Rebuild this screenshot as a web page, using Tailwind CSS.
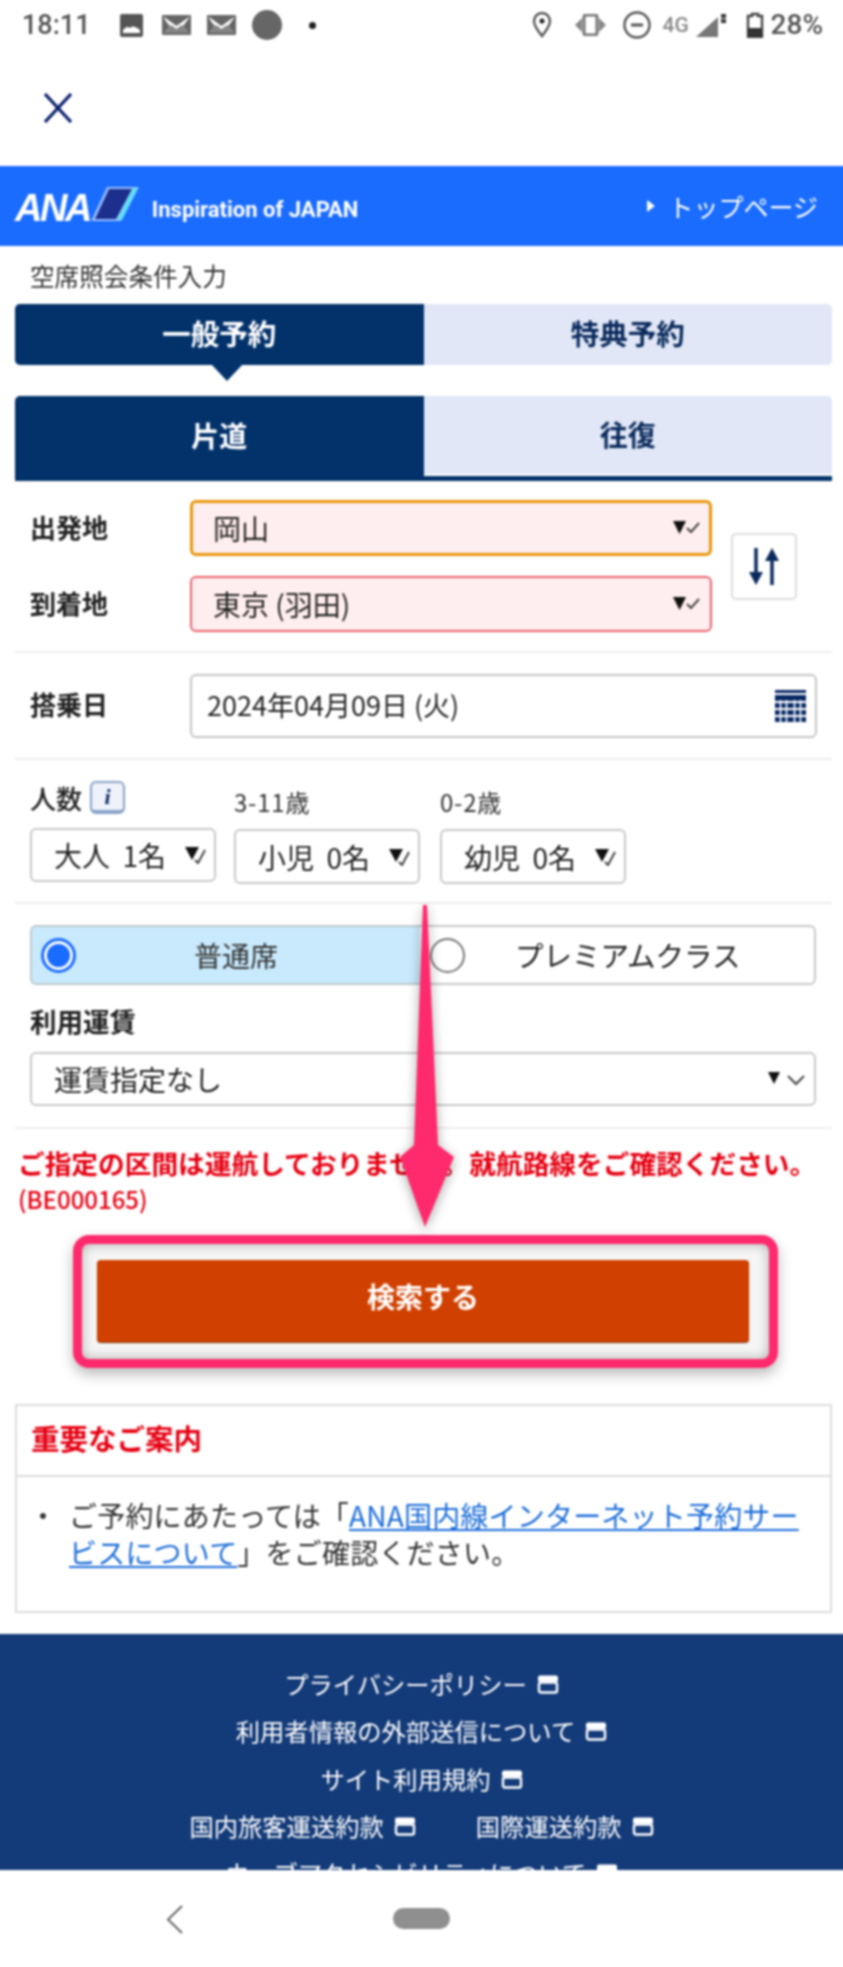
<!DOCTYPE html>
<html lang="ja">
<head>
<meta charset="utf-8">
<title>ANA</title>
<script src="https://cdn.jsdelivr.net/npm/@tailwindcss/browser@4"></script>
</head>
<body>
<div class="w-[843px] h-[1967px] overflow-hidden">
<div class="relative -ml-[4px] w-[851px] px-[4px] h-[1967px] overflow-hidden flex flex-col bg-white text-[#222] blur-[0.8px] font-['Noto_Sans_CJK_JP','Noto_Sans',sans-serif]">

  <!-- status bar -->
  <div class="h-[50px] shrink-0 flex items-center pl-[22px] pr-[20px] text-[#555]">
    <span class="text-[27px] leading-none font-['Roboto',sans-serif] font-medium w-[98px]">18:11</span>
    <svg class="w-[23px] h-[23px]" viewBox="0 0 23 23"><rect width="23" height="23" rx="2" fill="#555"/><path d="M3 19 L3 16 Q7 11 10 14 Q13 10 20 16 L20 19Z" fill="#fff"/></svg>
    <svg class="w-[29px] h-[20px] ml-[19px]" viewBox="0 0 29 20"><rect width="29" height="20" rx="1" fill="#666"/><path d="M2 2 L14.5 11 L27 2 L27 3 Q22 10 21 11 L27 18 L2 18 L8 11 Q4 7 2 3Z" fill="#fff"/><path d="M2 18 L9 10 L14.5 14 L20 10 L27 18Z" fill="#666" opacity=".8"/></svg>
    <svg class="w-[29px] h-[20px] ml-[16px]" viewBox="0 0 29 20"><rect width="29" height="20" rx="1" fill="#666"/><path d="M2 2 L14.5 11 L27 2 L27 3 Q22 10 21 11 L27 18 L2 18 L8 11 Q4 7 2 3Z" fill="#fff"/><path d="M2 18 L9 10 L14.5 14 L20 10 L27 18Z" fill="#666" opacity=".8"/></svg>
    <div class="w-[30px] h-[30px] ml-[16px] rounded-full bg-[#666]"></div>
    <div class="w-[7px] h-[7px] ml-[27px] rounded-full bg-[#222]"></div>
    <div class="flex-1"></div>
    <svg class="w-[20px] h-[26px]" viewBox="0 0 20 26"><path d="M10 24 Q2 14 2 9 A8 8 0 0 1 18 9 Q18 14 10 24Z" fill="none" stroke="#555" stroke-width="2.4"/><circle cx="10" cy="9" r="2.5" fill="#222"/></svg>
    <svg class="w-[31px] h-[22px] ml-[23px]" viewBox="0 0 31 22"><rect x="9" y="1" width="13" height="20" rx="2" fill="none" stroke="#777" stroke-width="3"/><path d="M0 11 L7 4 L7 18Z M31 11 L24 4 L24 18Z" fill="#888"/></svg>
    <svg class="w-[28px] h-[28px] ml-[17px]" viewBox="0 0 28 28"><circle cx="14" cy="14" r="12.5" fill="none" stroke="#555" stroke-width="2.4"/><rect x="8" y="12.5" width="12" height="3" fill="#555"/></svg>
    <span class="ml-[12px] text-[21px] leading-none font-['Roboto',sans-serif] font-medium text-[#888] w-[30px]">4G</span>
    <svg class="w-[32px] h-[26px] ml-[3px]" viewBox="0 0 32 26"><path d="M0 25 L22 5 L22 25Z" fill="#777"/><rect x="25" y="2" width="5" height="8" fill="#444" opacity=".7"/><rect x="25" y="2" width="5" height="3" fill="#333"/><rect x="25" y="8" width="5" height="3" fill="#333"/></svg>
    <svg class="w-[18px] h-[26px] ml-[18px]" viewBox="0 0 18 26"><path d="M6 2 L12 2 L12 4 L16 4 L16 25 L2 25 L2 4 L6 4Z" fill="none" stroke="#444" stroke-width="2.4"/><rect x="2" y="16" width="14" height="9" fill="#333"/></svg>
    <span class="ml-[7px] text-[28px] leading-none font-['Roboto',sans-serif] font-medium">28%</span>
  </div>

  <!-- close bar -->
  <div class="h-[116px] shrink-0 flex items-center pl-[43px]">
    <svg class="w-[30px] h-[30px]" viewBox="0 0 30 30"><path d="M2 1 L28 29 M28 1 L2 29" stroke="#0a1f6b" stroke-width="3.2" fill="none"/></svg>
  </div>

  <!-- header -->
  <div class="-mx-[4px] h-[80px] shrink-0 bg-[#1a6cff] flex items-center pl-[19px] pr-[29px] text-white">
    <span class="text-[38px] leading-none font-bold italic tracking-[-2.5px] font-['Liberation_Sans',sans-serif] mt-[4px]">ANA</span>
    <svg class="w-[50px] h-[36px] ml-[1px] -mt-[4px]" viewBox="0 0 50 36"><path d="M16 1 L48 1 L30 35 L0 35Z" fill="#fff" opacity=".55"/><path d="M18 3 L41 3 L25 33 L4 33Z" fill="#1c2f8c"/><path d="M42 2 L47 2 L31 34 L26 34Z" fill="#5fe0f5"/></svg>
    <span class="ml-[11px] mt-[7px] text-[22px] leading-none font-bold font-['Roboto',sans-serif]">Inspiration of JAPAN</span>
    <div class="flex-1"></div>
    <svg class="w-[8px] h-[12px] mr-[13px]" viewBox="0 0 9 14"><path d="M0 0 L9 7 L0 14Z" fill="#fff"/></svg>
    <span class="text-[25px] leading-none">トップページ</span>
  </div>

  <!-- page label -->
  <div class="h-[58px] shrink-0 flex items-center pl-[30px] text-[24.6px] leading-none text-[#333]">空席照会条件入力</div>

  <!-- form -->
  <div class="shrink-0 pl-[15px] pr-[11px]">
    <div class="grid grid-cols-2 h-[61px] text-[28.5px] font-bold">
      <div class="relative flex items-center justify-center pb-[2px] rounded-l-[5px] bg-[#03326b] text-white">一般予約
        <div class="absolute left-[196px] top-[60px] w-0 h-0 border-x-[16px] border-x-transparent border-t-[17px] border-t-[#03326b]"></div>
      </div>
      <div class="flex items-center justify-center pb-[2px] rounded-r-[5px] bg-[#e1e7f6] text-[#0a2a5c]">特典予約</div>
    </div>

    <div class="mt-[31px] grid grid-cols-2 h-[85px] text-[28px] font-bold border-b-[5px] border-[#03326b]">
      <div class="flex items-center justify-center pb-[2px] rounded-tl-[5px] bg-[#03326b] text-white">片道</div>
      <div class="flex items-center justify-center pb-[2px] rounded-tr-[5px] bg-[#e1e7f6] text-[#0a2a5c] border-b-[2px] border-white">往復</div>
    </div>

    <!-- route -->
    <div class="h-[172px] border-b-2 border-[#eeeeee] pt-[20px] flex items-center box-border">
      <div class="flex flex-col gap-[20px] -mt-[20px]">
        <div class="flex items-center">
          <span class="w-[175px] pl-[15px] pb-[4px] text-[26px] font-bold">出発地</span>
          <div class="w-[522px] h-[56px] rounded-[6px] border-[3px] border-[#e8960c] bg-[#ffeeef] flex items-center justify-between pl-[20px] pr-[8px] text-[28px]">
            <span>岡山</span>
            <svg class="w-[28px] h-[16px]" viewBox="0 0 28 16"><path d="M0 1 L13 1 L6.5 14Z" fill="#111"/><path d="M14 8 L18 12 L26 3" fill="none" stroke="#444" stroke-width="2"/></svg>
          </div>
        </div>
        <div class="flex items-center">
          <span class="w-[175px] pl-[15px] pb-[4px] text-[26px] font-bold">到着地</span>
          <div class="w-[522px] h-[56px] rounded-[6px] border-[2px] border-[#e8606a] bg-[#ffeeef] flex items-center justify-between pl-[21px] pr-[9px] text-[28px]">
            <span>東京 (羽田)</span>
            <svg class="w-[28px] h-[16px]" viewBox="0 0 28 16"><path d="M0 1 L13 1 L6.5 14Z" fill="#111"/><path d="M14 8 L18 12 L26 3" fill="none" stroke="#444" stroke-width="2"/></svg>
          </div>
        </div>
      </div>
      <button class="w-[66px] h-[67px] ml-[19px] -mt-[19px] rounded-[5px] border-2 border-[#dddddd] bg-white flex items-center justify-center">
        <svg class="w-[30px] h-[37px]" viewBox="0 0 30 37"><path d="M7 0 L7 28" stroke="#0a2a5c" stroke-width="3.5"/><path d="M0 24 L14 24 L7 37Z" fill="#0a2a5c"/><path d="M23 37 L23 9" stroke="#0a2a5c" stroke-width="3.5"/><path d="M16 13 L30 13 L23 0Z" fill="#0a2a5c"/></svg>
      </button>
    </div>

    <!-- date -->
    <div class="h-[107px] border-b-2 border-[#eeeeee] flex items-center box-border">
      <span class="w-[175px] pl-[15px] pb-[4px] text-[26px] font-bold">搭乗日</span>
      <div class="w-[627px] h-[64px] rounded-[6px] border-[2px] border-[#c4c4c4] bg-white flex items-center justify-between pl-[15px] pr-[9px] text-[27px]">
        <span>2024年04月09日 (火)</span>
        <svg class="w-[31px] h-[32px]" viewBox="0 0 31 32" fill="#0a2a66"><rect width="31" height="3"/><rect y="5" width="31" height="6"/><rect y="13" width="31" height="5"/><rect y="20" width="31" height="5"/><rect y="27" width="31" height="5"/><path d="M5.5 10 V32 M11.5 10 V32 M19.5 10 V32 M25.5 10 V32" stroke="#fff" stroke-width="1.6"/></svg>
      </div>
    </div>

    <!-- passengers -->
    <div class="h-[144px] border-b-2 border-[#eeeeee] pt-[20px] pl-[15px] flex box-border">
      <div class="w-[186px]">
        <div class="h-[48px] pb-[14px] flex items-center text-[26px] font-medium">人数
          <span class="ml-[8px] w-[35px] h-[33px] rounded-[6px] border-[2px] border-b-[4px] border-[#8aa3c9] bg-[#eef2fa] flex items-center justify-center text-[22px] font-bold italic text-[#0a2a66] font-['Liberation_Serif',serif]">i</span>
        </div>
        <div class="h-[54px] rounded-[6px] border-[2px] border-[#c8c8c8] flex items-center justify-between pl-[22px] pr-[8px] text-[28px]">
          <span class="whitespace-pre">大人  1名</span>
          <svg class="w-[21px] h-[18px]" viewBox="0 0 21 18"><path d="M0 1 L14 1 L7 14Z" fill="#111"/><path d="M10 14 L13 17 L20 4" fill="none" stroke="#444" stroke-width="2"/></svg>
        </div>
      </div>
      <div class="w-[186px] ml-[18px]">
        <div class="h-[49px] pb-[6px] flex items-center text-[24px] tracking-[0.8px] text-[#333]">3-11歳</div>
        <div class="h-[55px] rounded-[6px] border-[2px] border-[#c8c8c8] flex items-center justify-between pl-[22px] pr-[8px] text-[28px]">
          <span class="whitespace-pre">小児  0名</span>
          <svg class="w-[21px] h-[18px]" viewBox="0 0 21 18"><path d="M0 1 L14 1 L7 14Z" fill="#111"/><path d="M10 14 L13 17 L20 4" fill="none" stroke="#444" stroke-width="2"/></svg>
        </div>
      </div>
      <div class="w-[186px] ml-[20px]">
        <div class="h-[49px] pb-[6px] flex items-center text-[24px] tracking-[0.8px] text-[#333]">0-2歳</div>
        <div class="h-[55px] rounded-[6px] border-[2px] border-[#c8c8c8] flex items-center justify-between pl-[22px] pr-[8px] text-[28px]">
          <span class="whitespace-pre">幼児  0名</span>
          <svg class="w-[21px] h-[18px]" viewBox="0 0 21 18"><path d="M0 1 L14 1 L7 14Z" fill="#111"/><path d="M10 14 L13 17 L20 4" fill="none" stroke="#444" stroke-width="2"/></svg>
        </div>
      </div>
    </div>

    <!-- class + fare -->
    <div class="h-[225px] border-b-2 border-[#eeeeee] pt-[21px] pl-[15px] box-border">
      <div class="flex w-[786px] h-[60px] text-[28px]">
        <div class="w-[390px] rounded-l-[6px] border-[2px] border-r-0 border-[#c0c8cc] bg-[#c9eafc] flex items-center pl-[9px]">
          <span class="w-[35px] h-[35px] rounded-full border-[3px] border-[#1a6cff] bg-white flex items-center justify-center"><span class="w-[23px] h-[23px] rounded-full bg-[#1a6cff]"></span></span>
          <span class="ml-[118px] text-[#333]">普通席</span>
        </div>
        <div class="flex-1 rounded-r-[6px] border-[2px] border-l-0 border-[#c8c8c8] flex items-center pl-[10px]">
          <span class="w-[35px] h-[35px] rounded-full border-[2px] border-[#777] bg-white"></span>
          <span class="ml-[50px] text-[28.5px]">プレミアムクラス</span>
        </div>
      </div>
      <div class="h-[67px] pt-[5px] flex items-center text-[26.5px] font-bold">利用運賃</div>
      <div class="w-[786px] h-[54px] rounded-[6px] border-[2px] border-[#c8c8c8] flex items-center justify-between pl-[22px] pr-[8px] text-[28px]">
        <span>運賃指定なし</span>
        <svg class="w-[38px] h-[16px]" viewBox="0 0 38 16"><path d="M0 1 L12 1 L6 13Z" fill="#111"/><path d="M20 5 L28 13 L36 5" fill="none" stroke="#444" stroke-width="2"/></svg>
      </div>
    </div>

    <!-- error -->
    <div class="pt-[17px] pl-[3px] text-[26.7px] leading-[34.5px] font-bold text-[#e60012] whitespace-nowrap">ご指定の区間は運航しておりません。就航路線をご確認ください。<br><span class="font-medium text-[24px]">(BE000165)</span></div>

    <!-- search button with highlight -->
    <div class="mt-[19px] ml-[58px] w-[705px] h-[133px] rounded-[16px] border-[9px] border-[#ff2a6d] bg-[#f4f5f4] shadow-[0_6px_14px_rgba(0,0,0,0.28),inset_0_0_12px_rgba(0,0,0,0.3)] pl-[15px] pt-[16px]">
      <button class="w-[652px] h-[82px] pb-[10px] rounded-[4px] bg-[#d04000] shadow-[0_1px_1px_#7a2c00] text-white text-[28px] font-bold">検索する</button>
    </div>

    <!-- notice -->
    <div class="mt-[36px] h-[209px] border-2 border-[#dddddd]">
      <div class="h-[71px] border-b-2 border-[#dddddd] flex items-center pl-[14px] pb-[4px] text-[28.5px] font-bold text-[#e60012]">重要なご案内</div>
      <div class="pt-[20px] pl-[24px] relative text-[28px] leading-[37px] tracking-[0.2px] text-[#333]">
        <span class="absolute left-[12px] top-[20px]">・</span>
        <div class="pl-[28px] whitespace-nowrap">ご予約にあたっては「<a class="text-[#1a6cd8] underline">ANA国内線インターネット予約サー<br>ビスについて</a>」をご確認ください。</div>
      </div>
    </div>
  </div>

  <!-- footer -->
  <div class="-mx-[4px] mt-[21px] flex-1 min-h-0 overflow-hidden bg-[#143b79] pt-[26px] text-white text-[24.3px] leading-[47.3px]">
    <div class="flex justify-center items-center gap-[10px]">プライバシーポリシー<svg class="w-[22px] h-[21px]" viewBox="0 0 22 20"><path d="M3 2 H19 Q21 2 21 4 V8 H1 V4 Q1 2 3 2Z" fill="#fff"/><rect x="2" y="9" width="18" height="10" rx="2" fill="none" stroke="#fff" stroke-width="2.4"/></svg></div>
    <div class="flex justify-center items-center gap-[10px]">利用者情報の外部送信について<svg class="w-[22px] h-[21px]" viewBox="0 0 22 20"><path d="M3 2 H19 Q21 2 21 4 V8 H1 V4 Q1 2 3 2Z" fill="#fff"/><rect x="2" y="9" width="18" height="10" rx="2" fill="none" stroke="#fff" stroke-width="2.4"/></svg></div>
    <div class="flex justify-center items-center gap-[10px]">サイト利用規約<svg class="w-[22px] h-[21px]" viewBox="0 0 22 20"><path d="M3 2 H19 Q21 2 21 4 V8 H1 V4 Q1 2 3 2Z" fill="#fff"/><rect x="2" y="9" width="18" height="10" rx="2" fill="none" stroke="#fff" stroke-width="2.4"/></svg></div>
    <div class="flex justify-center items-center">
      <span class="flex items-center gap-[10px]">国内旅客運送約款<svg class="w-[22px] h-[21px]" viewBox="0 0 22 20"><path d="M3 2 H19 Q21 2 21 4 V8 H1 V4 Q1 2 3 2Z" fill="#fff"/><rect x="2" y="9" width="18" height="10" rx="2" fill="none" stroke="#fff" stroke-width="2.4"/></svg></span>
      <span class="ml-[60px] flex items-center gap-[10px]">国際運送約款<svg class="w-[22px] h-[21px]" viewBox="0 0 22 20"><path d="M3 2 H19 Q21 2 21 4 V8 H1 V4 Q1 2 3 2Z" fill="#fff"/><rect x="2" y="9" width="18" height="10" rx="2" fill="none" stroke="#fff" stroke-width="2.4"/></svg></span>
    </div>
    <div class="flex justify-center items-center gap-[10px]">ウェブアクセシビリティについて<svg class="w-[22px] h-[21px]" viewBox="0 0 22 20"><path d="M3 2 H19 Q21 2 21 4 V8 H1 V4 Q1 2 3 2Z" fill="#fff"/><rect x="2" y="9" width="18" height="10" rx="2" fill="none" stroke="#fff" stroke-width="2.4"/></svg></div>
  </div>

  <!-- navigation bar -->
  <div class="h-[97px] shrink-0 bg-white flex items-start justify-center pt-[38px] relative">
    <svg class="absolute left-[166px] top-[35px] w-[18px] h-[29px]" viewBox="0 0 18 29"><path d="M16 1 L2 14.5 L16 28" fill="none" stroke="#666" stroke-width="2"/></svg>
    <div class="w-[57px] h-[21px] -ml-[1px] rounded-full bg-[#8f8f8f]"></div>
  </div>

  <!-- annotation arrow over the form -->
  <svg class="absolute left-[399px] top-[905px] w-[60px] h-[322px] drop-shadow-[0_3px_6px_rgba(0,0,0,0.35)]" viewBox="0 0 60 322"><path d="M28 0 L32 0 L43 240 L59 252 L30 322 L5 252 L19 240Z" fill="#ff2a6d"/></svg>
</div>
</div>
</body>
</html>
